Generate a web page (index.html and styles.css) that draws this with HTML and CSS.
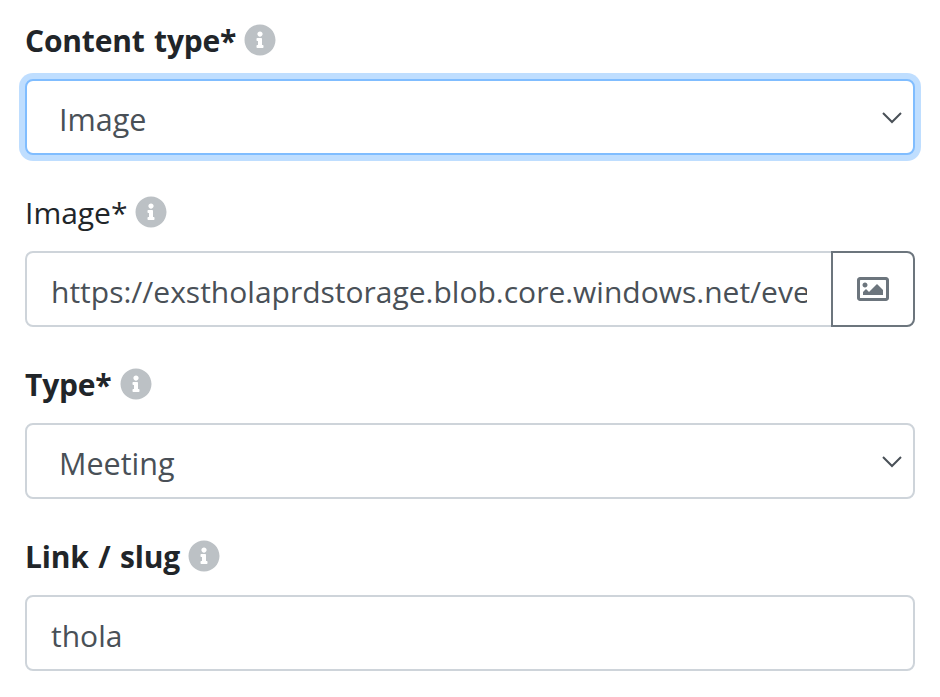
FILE: index.html
```html
<!DOCTYPE html>
<html lang="en">
<head>
  <meta charset="UTF-8" />
  <title>Event settings</title>
  <link rel="stylesheet" href="styles.css">
</head>
<body>
  <!-- Icon definitions -->
  <svg class="icon-defs" aria-hidden="true">
    <symbol id="icon-info" viewBox="0 0 512 512">
      <path d="M256 8C119.043 8 8 119.083 8 256c0 136.997 111.043 248 248 248s248-111.003 248-248C504 119.083 392.957 8 256 8zm0 110c23.196 0 42 18.804 42 42s-18.804 42-42 42-42-18.804-42-42 18.804-42 42-42zm56 254c0 6.627-5.373 12-12 12h-88c-6.627 0-12-5.373-12-12v-24c0-6.627 5.373-12 12-12h12v-64h-12c-6.627 0-12-5.373-12-12v-24c0-6.627 5.373-12 12-12h64c6.627 0 12 5.373 12 12v100h12c6.627 0 12 5.373 12 12v24z"/>
    </symbol>
  </svg>

  <form class="form">
    <div class="form-group">
      <div class="field-label">
        <label class="bold" for="content-type">Content type*</label>
        <svg class="info-icon"><use href="#icon-info"/></svg>
      </div>
      <div class="select-wrap">
        <select id="content-type" class="form-control custom-select is-focus">
          <option>Image</option>
        </select>
        <svg class="chevron" viewBox="0 0 20 12"><path d="M1 1l9 9 9-9"/></svg>
      </div>
    </div>

    <div class="form-group">
      <div class="field-label">
        <label for="image">Image*</label>
        <svg class="info-icon"><use href="#icon-info"/></svg>
      </div>
      <div class="input-group">
        <input id="image" class="form-control" type="text" value="https://exstholaprdstorage.blob.core.windows.net/events/thola/image.png">
        <button class="btn-outline" type="button" aria-label="Choose image">
          <svg class="image-icon" viewBox="0 0 512 512">
            <path d="M464 64H48C21.49 64 0 85.49 0 112v288c0 26.51 21.49 48 48 48h416c26.51 0 48-21.49 48-48V112c0-26.51-21.49-48-48-48zm-6 336H54a6 6 0 0 1-6-6V118a6 6 0 0 1 6-6h404a6 6 0 0 1 6 6v276a6 6 0 0 1-6 6zM128 152c-22.091 0-40 17.909-40 40s17.909 40 40 40 40-17.909 40-40-17.909-40-40-40zM96 352h320v-80l-87.515-87.515c-4.686-4.686-12.284-4.686-16.971 0L192 304l-39.515-39.515c-4.686-4.686-12.284-4.686-16.971 0L96 304v48z"/>
          </svg>
        </button>
      </div>
    </div>

    <div class="form-group">
      <div class="field-label">
        <label class="bold" for="type">Type*</label>
        <svg class="info-icon"><use href="#icon-info"/></svg>
      </div>
      <div class="select-wrap">
        <select id="type" class="form-control custom-select">
          <option>Meeting</option>
        </select>
        <svg class="chevron" viewBox="0 0 20 12"><path d="M1 1l9 9 9-9"/></svg>
      </div>
    </div>

    <div class="form-group">
      <div class="field-label">
        <label class="bold" for="slug">Link / slug</label>
        <svg class="info-icon"><use href="#icon-info"/></svg>
      </div>
      <input id="slug" class="form-control" type="text" value="thola">
    </div>
  </form>
</body>
</html>
```

FILE: styles.css
```css
/* Reset and Base Styles */
* {
  margin: 0;
  padding: 0;
  box-sizing: border-box;
}
body {
  font-family: "Open Sans", "Noto Sans", sans-serif;
  font-size: 30px;
  color: #212529;
  background-color: #fff;
  overflow: hidden;
}
.icon-defs {
  display: none;
}

/* Form Layout */
.form {
  display: flex;
  flex-direction: column;
  gap: 33px;
  padding: 16px 25px 0;
}
.field-label {
  display: flex;
  align-items: center;
  gap: 8px;
  height: 48px;
  margin-bottom: 15px;
}
.bold {
  font-weight: 700;
  letter-spacing: -0.2px;
  word-spacing: 2px;
}
.info-icon {
  width: 32px;
  height: 32px;
  fill: #bcc1c5;
}

/* Inputs */
.form-control {
  display: block;
  width: 100%;
  height: 76px;
  padding: 4px 24px 0;
  font-family: inherit;
  font-size: inherit;
  color: #495057;
  background-color: #fff;
  border: 2px solid #ced4da;
  border-radius: 8px;
  outline: none;
}
.custom-select {
  appearance: none;
  padding-left: 32px;
  font-size: 30.5px;
}
.is-focus {
  border-color: #80bdff;
  box-shadow: 0 0 0 6px rgba(0, 123, 255, 0.25);
}

/* Select Arrow */
.select-wrap {
  position: relative;
}
.chevron {
  position: absolute;
  top: 33px;
  right: 13px;
  width: 20px;
  height: 12px;
  fill: none;
  stroke: #495057;
  stroke-width: 2;
}

/* Input With Button */
.input-group {
  display: flex;
}
.input-group .form-control {
  flex: 1;
  min-width: 0;
  border-top-right-radius: 0;
  border-bottom-right-radius: 0;
}
.btn-outline {
  display: flex;
  align-items: center;
  justify-content: center;
  flex: none;
  width: 84px;
  height: 76px;
  margin-left: -2px;
  background-color: #fff;
  border: 2px solid #6c757d;
  border-radius: 0 8px 8px 0;
}
.image-icon {
  width: 32px;
  height: 32px;
  fill: #6c757d;
}
```
